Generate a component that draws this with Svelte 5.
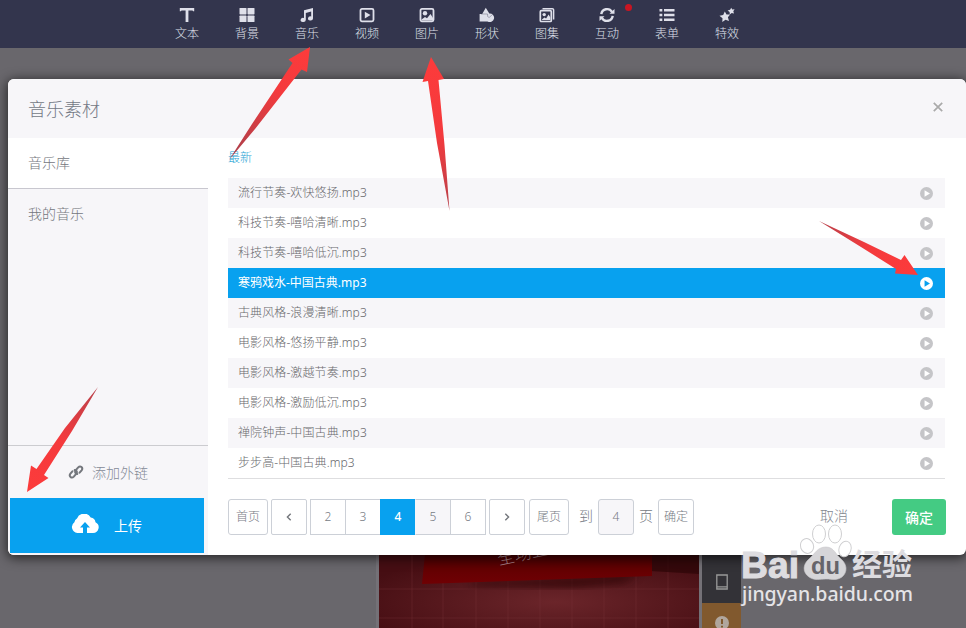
<script>
  const tools = [
    { name: '文本', icon: 'text' },
    { name: '背景', icon: 'grid' },
    { name: '音乐', icon: 'music' },
    { name: '视频', icon: 'video' },
    { name: '图片', icon: 'image' },
    { name: '形状', icon: 'shape' },
    { name: '图集', icon: 'album' },
    { name: '互动', icon: 'sync', dot: true },
    { name: '表单', icon: 'list' },
    { name: '特效', icon: 'stars' }
  ];
  const tracks = [
    '流行节奏-欢快悠扬.mp3',
    '科技节奏-嘻哈清晰.mp3',
    '科技节奏-嘻哈低沉.mp3',
    '寒鸦戏水-中国古典.mp3',
    '古典风格-浪漫清晰.mp3',
    '电影风格-悠扬平静.mp3',
    '电影风格-激越节奏.mp3',
    '电影风格-激励低沉.mp3',
    '禅院钟声-中国古典.mp3',
    '步步高-中国古典.mp3'
  ];
  const pages = [2, 3, 4, 5, 6];
  let selected = $state(3);
  let page = $state(4);
</script>

<div class="app">
  <nav class="toolbar">
    {#each tools as tool}
      <div class="tool">
        <svg width="16" height="16" viewBox="0 0 16 16" fill="currentColor">
          {#if tool.icon === 'text'}
            <path d="M.8 1h14.4v3.200h-1.100l-.6-.7H9.400V15H6.600V3.500H2.500l-.6.700H.8z" />
          {:else if tool.icon === 'grid'}
            <rect x=".5" y=".9" width="7" height="6.600" rx=".7" /><rect x="8.500" y=".9" width="7" height="6.600" rx=".7" />
            <rect x=".5" y="8.500" width="7" height="6.600" rx=".7" /><rect x="8.500" y="8.500" width="7" height="6.600" rx=".7" />
          {:else if tool.icon === 'music'}
            <path d="M5 3.200 14 1v10.500a2.500 2 0 1 1-1.800-2V4.500L6.800 5.900V13A2.600 2 0 1 1 5 11z" />
          {:else if tool.icon === 'video'}
            <rect x="1.500" y="1.900" width="13" height="12.400" rx="1.500" fill="none" stroke="currentColor" stroke-width="1.800" />
            <path d="m5.800 4.700 5.700 3.400-5.700 3.400z" />
          {:else if tool.icon === 'image'}
            <rect x="1.500" y="1.900" width="13" height="12.400" rx="1.500" fill="none" stroke="currentColor" stroke-width="1.800" />
            <circle cx="6" cy="6.200" r="2.200" /><path d="M2.500 12.500 6 10l2 1.300L11.500 7l2.500 4v2.600H2.500z" />
          {:else if tool.icon === 'shape'}
            <path d="M6.800.7 10.300 6.500A4.300 4.300 0 1 1 8.500 14.400H.6V7h2.600z" />
            <path d="M2 7h6.600v2.500l1.500 1L13 8" fill="none" stroke="#33354d" stroke-width=".35" />
          {:else if tool.icon === 'album'}
            <path d="M3.500 1.700h9.800a1.300 1.300 0 0 1 1.300 1.300v9.500" fill="none" stroke="currentColor" stroke-width="1.500" />
            <rect x="1.300" y="3.700" width="11" height="10.800" rx="1" fill="none" stroke="currentColor" stroke-width="1.700" />
            <circle cx="5.200" cy="7.600" r="1.700" /><path d="m3 12.500 2.400-2 1.700 1 2.500-4 1.700 3v2.500H3z" />
          {:else if tool.icon === 'sync'}
            <path d="M2.300 7.200A5.800 5.800 0 0 1 13 4.900M13.700 8.800A5.800 5.800 0 0 1 3 11.100" fill="none" stroke="currentColor" stroke-width="2.400" />
            <path d="M10.500 6.800h5V2zM5.500 9.200h-5V14z" />
          {:else if tool.icon === 'list'}
            <path d="M.5 2h2.800v2.500H.5zM5 2h10.500v2.500H5zM.5 6.800h2.800v2.500H.5zM5 6.800h10.500v2.500H5zM.5 11.600h2.800v2.500H.5zM5 11.600h10.500v2.500H5z" />
          {:else}
            <path d="m5.800 4.500 1.700 3.100 3.600-.2-2.200 2.900 1.100 3.700-3.500-1.300L3.300 15l.2-3.800L.5 8.700l3.700-.8z" />
            <path d="m12.200.7 1 1.700 2.400-.1-1.300 2 .7 2.300-2.300-.7-1.900 1.500-.2-2.400-2-1.400 2.500-.8z" />
          {/if}
        </svg>
        <span>{tool.name}</span>
        {#if tool.dot}<i class="dot"></i>{/if}
      </div>
    {/each}
  </nav>

  <div class="stage">
    <div class="phone">
      <svg width="320" height="74" viewBox="0 0 320 74">
        <defs>
          <radialGradient id="wall" cx=".55" cy=".65" r=".65">
            <stop offset="0" stop-color="#6b252a" /><stop offset="1" stop-color="#460e13" />
          </radialGradient>
          <linearGradient id="banner" x1="0" y1="0" x2="0" y2="1">
            <stop offset="0" stop-color="#460002" /><stop offset=".55" stop-color="#650002" /><stop offset="1" stop-color="#700003" />
          </linearGradient>
          <filter id="soft"><feGaussianBlur stdDeviation="4" /></filter>
        </defs>
        <rect width="320" height="74" fill="url(#wall)" />
        <path d="M0 35h320M0 64h320M33 0v74M64 0v74M97 0v74M129 0v74M161 0v74M193 0v74M225 0v74M257 0v74M289 0v74" stroke="#7c373b" stroke-opacity=".35" />
        <path d="M272 17 320 20V0H272z" fill="#2c0507" opacity=".7" />
        <path d="m90 28 170-8-15 9-50 5-100-2z" fill="#260406" opacity=".65" filter="url(#soft)" />
        <path d="M46 0h227v22L43 30z" fill="url(#banner)" />
        <text x="120" y="11" transform="rotate(-12 120 11)" font-size="17" font-weight="300" fill="#a9858a">全场五</text>
      </svg>
    </div>
    <div class="side">
      <div class="device">
        <svg width="12" height="16" viewBox="0 0 12 16"><path d="M.8 1h10.400v14H.8zM.8 12.800h10.400" fill="none" stroke="#999" stroke-width="1.300" /></svg>
      </div>
      <div class="warn">
        <svg width="14" height="14" viewBox="0 0 14 14"><circle cx="7" cy="7" r="7" fill="#b0a69d" /><path d="M7 3v5M7 9.700v1.700" stroke="#81592e" stroke-width="2" /></svg>
      </div>
    </div>
  </div>

  <section class="modal">
    <header>
      <h1>音乐素材</h1>
      <svg class="close" width="10" height="10" viewBox="0 0 10 10"><path d="m.8.800 8.400 8.400M9.200.8.800 9.200" stroke="#aaa" stroke-width="1.700" /></svg>
    </header>
    <div class="body">
      <aside>
        <div class="tab active">音乐库</div>
        <div class="tab">我的音乐</div>
        <div class="link">
          <svg width="16" height="16" viewBox="0 0 16 16" fill="none" stroke="#74777d" stroke-width="2" stroke-linecap="round">
            <path d="M9.300 9.900C7.200 9.700 6.500 7.700 7.800 6.200L10.200 3.400c2.300-2.300 5.300.5 3.400 2.900l-2 2.400" />
            <path d="M6.700 6.100C8.800 6.300 9.500 8.300 8.200 9.800L5.800 12.600c-2.300 2.300-5.300-.5-3.400-2.900l2-2.400" />
          </svg>
          <span>添加外链</span>
        </div>
        <button class="upload">
          <svg width="28" height="20" viewBox="0 0 28 20"><path d="M6.300 19A6 6 0 0 1 3.400 8.200 5 5 0 0 1 6 4.500 7.600 7.600 0 0 1 19.700 3.500 5.500 5.500 0 0 1 24.500 8.200 5.700 5.700 0 0 1 22 19h-6v-5.500h3L14 8l-5 5.500h3V19z" fill="#fff" /></svg>
          <span>上传</span>
        </button>
      </aside>
      <main>
        <div class="category">最新</div>
        <ul>
          {#each tracks as track, i}
            <li class:selected={i === selected}>
              <span>{track}</span>
              <svg width="13" height="13" viewBox="0 0 12 12"><circle cx="6" cy="6" r="6" fill="currentColor" /><path class="tri" d="m4.200 3 5 3-5 3z" /></svg>
            </li>
          {/each}
        </ul>
        <footer>
          <div class="box first">首页</div>
          <div class="box prev"><svg width="6" height="8" viewBox="0 0 6 8"><path d="M4.700.7 1.400 4l3.300 3.300" /></svg></div>
          <div class="pages">
            {#each pages as n}
              <div class="num" class:current={n === page} class:hover={n === 5}>{n}</div>
            {/each}
          </div>
          <div class="box next"><svg width="6" height="8" viewBox="0 0 6 8"><path d="M1.300.7 4.600 4 1.300 7.300" /></svg></div>
          <div class="box last">尾页</div>
          <span class="to">到</span>
          <div class="box goto">4</div>
          <span class="unit">页</span>
          <div class="box go">确定</div>
          <span class="cancel">取消</span>
          <button class="ok">确定</button>
        </footer>
      </main>
    </div>
  </section>

  <svg class="overlay" width="966" height="628" viewBox="0 0 966 628">
    <defs>
      <linearGradient id="a1" gradientUnits="userSpaceOnUse" x1="230" y1="159" x2="310" y2="47"><stop offset="0" stop-color="#a8404c" /><stop offset=".6" stop-color="#f43a3d" /><stop offset="1" stop-color="#fd3b3b" /></linearGradient>
      <linearGradient id="a2" gradientUnits="userSpaceOnUse" x1="450" y1="210" x2="431" y2="58"><stop offset="0" stop-color="#b8414b" /><stop offset=".5" stop-color="#f43a3d" /><stop offset="1" stop-color="#fd3b3b" /></linearGradient>
      <linearGradient id="a3" gradientUnits="userSpaceOnUse" x1="98" y1="387" x2="27" y2="492"><stop offset="0" stop-color="#b8414b" /><stop offset=".5" stop-color="#f43a3d" /><stop offset="1" stop-color="#fd3b3b" /></linearGradient>
      <linearGradient id="a4" gradientUnits="userSpaceOnUse" x1="819" y1="221" x2="918" y2="275"><stop offset="0" stop-color="#b8414b" /><stop offset=".5" stop-color="#f43a3d" /><stop offset="1" stop-color="#fd3b3b" /></linearGradient>
    </defs>
    <path fill="url(#a1)" d="m310 47-21.500 12.500 4 3.500L252 124l-23 36 26-31 46.500-59.500 5.500 2.500z" />
    <path fill="url(#a2)" d="m431 57-8.500 25 5.500-1 9 62 12.500 68-5-66-6-65 5.500-1z" />
    <path fill="url(#a3)" d="m27 492 4-26.500 5.500 3.500L65 428l33-41-26 44-28 44 4.500 3z" />
    <path fill="url(#a4)" d="m918 275-13.500-20-3.500 5-37-18-45-21 42 26 35 22-1 4.500z" />

    <g class="mark">
      <g fill="#fff" stroke="#cfcfd1" stroke-width="1">
        <ellipse cx="807" cy="546" rx="6.500" ry="7.500" transform="rotate(-20 807 546)" />
        <ellipse cx="819" cy="534" rx="6.500" ry="9" />
        <ellipse cx="835" cy="534" rx="6.500" ry="9" />
        <ellipse cx="845" cy="549" rx="6" ry="8" transform="rotate(18 845 549)" />
      </g>
      <path d="M826 547c8 0 10 8 15 12 6 5 7 13 1 18-6 4-10 2-16 2s-11 2-17-2c-7-5-6-13 0-18s8-12 17-12z" fill="#d6d5d8" stroke="#c9c8cb" stroke-width=".6" />
      <text x="741" y="578" class="bai" textLength="58" lengthAdjust="spacingAndGlyphs">Bai</text>
      <text x="811" y="574" class="du" textLength="29" lengthAdjust="spacingAndGlyphs">du</text>
      <text x="852" y="575" class="jy" textLength="60" lengthAdjust="spacingAndGlyphs">经验</text>
      <text x="742" y="601" class="url" textLength="171" lengthAdjust="spacing">jingyan.baidu.com</text>
    </g>
  </svg>
</div>

<style>
  :global(body) { margin: 0; }
  * { box-sizing: border-box; }
  .app {
    position: relative; width: 966px; height: 628px; overflow: hidden;
    display: flex; flex-direction: column; background: #69676c;
    font: 12px 'Noto Sans', 'Noto Sans CJK SC', sans-serif; color: #76767b;
  }
  .toolbar { height: 48px; flex: none; background: #33354d; display: flex; padding-left: 157px; color: #dfe0ea; }
  .tool { position: relative; width: 60px; display: flex; flex-direction: column; align-items: center; padding-top: 7px; }
  .tool svg { display: block; flex: none; }
  .tool span { line-height: 18px; margin-top: 2px; font-weight: 300; }
  .dot { position: absolute; left: 48px; top: 4px; width: 7px; height: 7px; border-radius: 50%; background: #c91522; }

  .stage { flex: 1; display: flex; align-items: flex-end; padding-left: 376px; }
  .phone { width: 326px; height: 74px; border: solid #747177; border-width: 0 3px; overflow: hidden; }
  .phone svg { display: block; }
  .side { width: 39px; height: 74px; }
  .device { height: 49px; background: #333237; display: flex; justify-content: center; padding-top: 20px; }
  .warn { height: 25px; background: #81592e; display: flex; justify-content: center; padding-top: 13px; }

  .modal {
    position: absolute; left: 8px; top: 79px; width: 958px; height: 476px;
    display: flex; flex-direction: column; background: #fff; border-radius: 6px; overflow: hidden;
    box-shadow: 0 2px 12px 1px rgba(0, 0, 0, .65);
  }
  header { height: 59px; flex: none; background: #f7f6f9; display: flex; align-items: center; justify-content: space-between; padding: 0 23px 0 20px; }
  h1 { margin: 0; font-size: 18px; line-height: 26px; font-weight: 300; color: #747985; }
  .close { margin-top: -4px; }
  .body { flex: 1; display: flex; }
  aside { width: 200px; flex: none; background: #f7f6f9; display: flex; flex-direction: column; font-size: 14px; font-weight: 300; }
  .tab { height: 51px; flex: none; padding-left: 20px; line-height: 50px; color: #74767d; }
  .tab.active { background: #fff; border-bottom: 1px solid #c8c7cf; }
  .link { margin-top: auto; height: 53px; border-top: 1px solid #ccccd0; display: flex; align-items: center; padding-left: 60px; gap: 8px; color: #858b98; }
  .upload {
    height: 55px; flex: none; margin: 0 4px 2px 2px; padding: 0 0 2px 61px; border: 0; background: #08a1ef; color: #fff;
    display: flex; align-items: center; gap: 15px; font: 400 14px 'Noto Sans', 'Noto Sans CJK SC', sans-serif;
  }
  .upload svg { margin-top: -2px; }
  main { flex: 1; display: flex; flex-direction: column; padding: 0 0 0 20px; }
  .category { height: 40px; line-height: 40px; color: #1ea3d4; font-weight: 300; }
  ul { list-style: none; margin: 0; padding: 0; width: 717px; height: 301px; border-bottom: 1px solid #dedee0; }
  li { height: 30px; display: flex; align-items: center; justify-content: space-between; padding: 0 12px 0 10px; color: #c5c5c8; }
  li span { color: #68686c; font-weight: 300; line-height: 30px; letter-spacing: .1px; }
  li:nth-child(odd) { background: #f7f6f9; }
  .tri { fill: #fff; }
  li.selected { background: #08a1ef; color: #fff; }
  li.selected span { color: #fff; font-weight: 400; letter-spacing: 0; }
  li.selected .tri { fill: #08a1ef; }

  footer { display: flex; padding-top: 20px; line-height: 34px; font-weight: 300; }
  .box, .num { height: 36px; flex: none; display: flex; align-items: center; justify-content: center; border: 1px solid #ccd0d7; color: #777b84; }
  .box { border-radius: 3px; }
  .box path { fill: none; stroke: #74777c; stroke-width: 1.400; }
  .first { width: 40px; }
  .prev { width: 36px; margin-left: 3px; border-radius: 2px; }
  .pages { display: flex; margin-left: 3px; }
  .num { width: 35px; border-right: 0; }
  .num:last-child { width: 36px; border-right: 1px solid #ccd0d7; }
  .num.hover { background: #f7f6f9; border-left-color: #f7f6f9; }
  .num.current { background: #08a1ef; border-color: #08a1ef; color: #fff; font-weight: 500; }
  .next { width: 36px; margin-left: 3px; border-radius: 2px; }
  .last { width: 40px; margin-left: 4px; }
  .to { font-size: 14px; margin-left: 10px; width: 14px; color: #777b84; }
  .goto { width: 36px; margin-left: 5px; background: #f7f6f9; }
  .unit { font-size: 14px; margin-left: 5px; width: 14px; color: #777b84; }
  .go { width: 36px; margin-left: 5px; }
  .cancel { font-size: 14px; margin-left: 126px; width: 28px; color: #84888f; }
  .ok { width: 54px; height: 36px; margin-left: 44px; border: 0; border-radius: 3px; padding: 0; background: #44cb83; color: #fff; font: 500 14px 'Noto Sans', 'Noto Sans CJK SC', sans-serif; }

  .overlay { position: absolute; left: 0; top: 0; pointer-events: none; }
  .mark text { fill: #dddce0; font-weight: 700; }
  .mark .bai { font: 700 37px 'Liberation Sans', sans-serif; stroke: #dddce0; stroke-width: 1; }
  .mark .du { font: 700 24px 'Liberation Sans', sans-serif; fill: #66646a; }
  .mark .jy { font: 700 30px 'Noto Sans CJK SC', sans-serif; }
  .mark .url { font: 500 19.500px 'Noto Sans', sans-serif; fill: #e5e4e7; }
</style>
